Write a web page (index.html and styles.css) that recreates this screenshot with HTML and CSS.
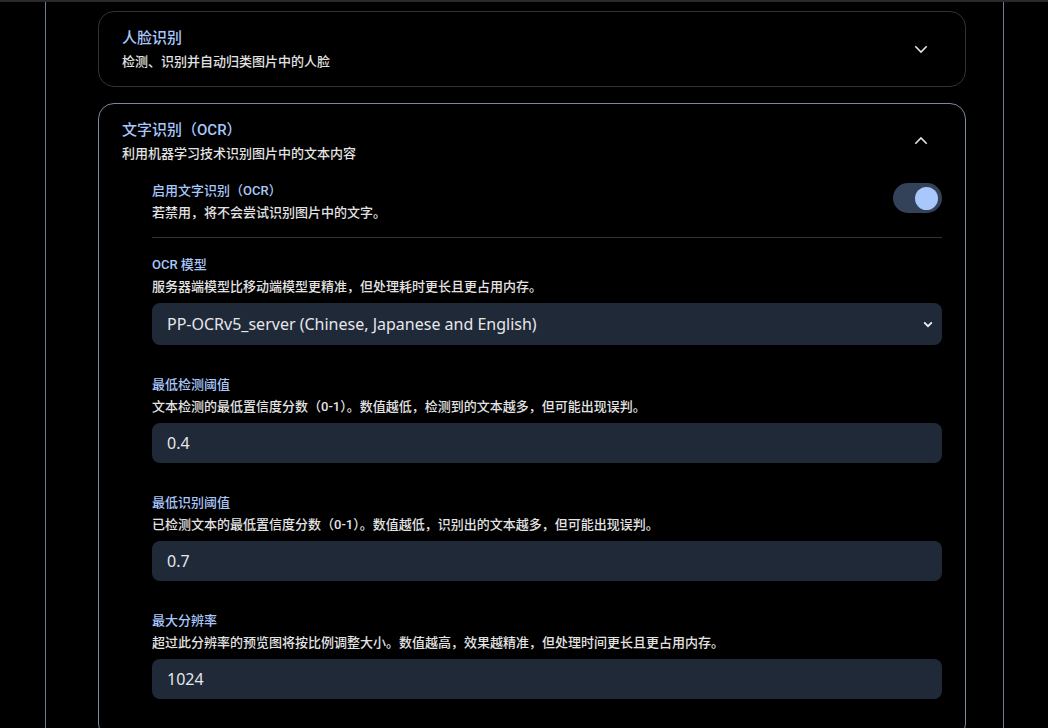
FILE: index.html
```html
<!DOCTYPE html>
<html lang="zh-CN">
<head>
<meta charset="utf-8">
<title>设置</title>
<link rel="stylesheet" href="styles.css">
</head>
<body>
<div class="topbar"></div>
<main class="page">
  <section class="card">
    <div class="card-head">
      <div class="head-text">
        <div class="card-title">人脸识别</div>
        <div class="card-sub">检测、识别并自动归类图片中的人脸</div>
      </div>
      <button class="icon-btn" aria-label="展开">
        <svg width="24" height="24" viewBox="0 0 24 24"><path d="M6.3 9.3L12 15l5.7-5.7" fill="none" stroke="#e3e3e3" stroke-width="1.6"/></svg>
      </button>
    </div>
  </section>

  <section class="card open">
    <div class="card-head">
      <div class="head-text">
        <div class="card-title">文字识别（OCR）</div>
        <div class="card-sub">利用机器学习技术识别图片中的文本内容</div>
      </div>
      <button class="icon-btn" aria-label="收起">
        <svg width="24" height="24" viewBox="0 0 24 24"><path d="M6.3 14.7L12 9l5.7 5.7" fill="none" stroke="#e3e3e3" stroke-width="1.6"/></svg>
      </button>
    </div>
    <div class="card-body">
      <div class="toggle-row">
        <div class="field-text">
          <div class="label">启用文字识别（OCR）</div>
          <div class="desc">若禁用，将不会尝试识别图片中的文字。</div>
        </div>
        <div class="switch"><div class="knob"></div></div>
      </div>

      <div class="fields">
        <div class="field">
          <div class="label">OCR 模型</div>
          <div class="desc">服务器端模型比移动端模型更精准，但处理耗时更长且更占用内存。</div>
          <div class="select">
            <span>PP-OCRv5_server (Chinese, Japanese and English)</span>
            <svg width="10" height="7" viewBox="0 0 10 7"><path d="M1.2 1.4L5 5.2 8.8 1.4" fill="none" stroke="#f0f0f0" stroke-width="1.8"/></svg>
          </div>
        </div>

        <div class="field">
          <div class="label">最低检测阈值</div>
          <div class="desc">文本检测的最低置信度分数（0-1）。数值越低，检测到的文本越多，但可能出现误判。</div>
          <div class="input">0.4</div>
        </div>

        <div class="field">
          <div class="label">最低识别阈值</div>
          <div class="desc">已检测文本的最低置信度分数（0-1）。数值越低，识别出的文本越多，但可能出现误判。</div>
          <div class="input">0.7</div>
        </div>

        <div class="field">
          <div class="label">最大分辨率</div>
          <div class="desc">超过此分辨率的预览图将按比例调整大小。数值越高，效果越精准，但处理时间更长且更占用内存。</div>
          <div class="input">1024</div>
        </div>
      </div>
    </div>
  </section>
</main>
</body>
</html>
```

FILE: styles.css
```css
* { box-sizing: border-box; }
html, body {
  margin: 0;
  padding: 0;
  background: #000;
  height: 100%;
  overflow: hidden;
}
body {
  font-family: Roboto, "Noto Sans CJK SC", sans-serif;
  color: #e3e3e3;
}
.topbar {
  height: 2px;
  background: #2a2a2a;
}
.page {
  margin-left: 45px;
  width: 959px;
  min-height: 726px;
  border-left: 1px solid #717c8e;
  border-right: 1px solid #717c8e;
  padding: 9px 37px 0 52px;
  display: flex;
  flex-direction: column;
  gap: 16px;
}
.card {
  border: 1px solid #2e333b;
  border-radius: 16px;
  padding: 0 23px;
}
.card.open {
  border-color: #7b879a;
}
.card-head {
  display: flex;
  align-items: center;
  justify-content: space-between;
  padding: 14px 0;
}
.head-text {
  display: flex;
  flex-direction: column;
  gap: 2px;
}
.card-title {
  font-size: 15px;
  line-height: 24px;
  font-weight: 500;
  color: #a8c7fa;
}
.card-sub {
  font-size: 13px;
  line-height: 20px;
  font-weight: 500;
  color: #e3e3e3;
}
.icon-btn {
  width: 40px;
  height: 40px;
  border: none;
  background: transparent;
  padding: 0;
  display: flex;
  align-items: center;
  justify-content: center;
  margin-right: 1px;
}
.card-body {
  padding: 3px 0 40px 30px;
}
.toggle-row {
  display: flex;
  justify-content: space-between;
  align-items: flex-start;
  padding-bottom: 14px;
  border-bottom: 1px solid #333;
}
.field-text {
  display: flex;
  flex-direction: column;
  gap: 2px;
}
.label {
  font-size: 13px;
  line-height: 20px;
  font-weight: 500;
  color: #a8c7fa;
}
.desc {
  font-size: 13px;
  line-height: 20px;
  font-weight: 500;
  color: #e3e3e3;
}
.switch {
  width: 49px;
  height: 30px;
  margin-top: 2px;
  border-radius: 15px;
  background: #344259;
  display: flex;
  align-items: center;
  justify-content: flex-end;
  padding-right: 4px;
}
.knob {
  width: 23px;
  height: 23px;
  border-radius: 50%;
  background: #a8c7fa;
}
.fields {
  padding-top: 17px;
  display: flex;
  flex-direction: column;
  gap: 30px;
}
.field {
  display: flex;
  flex-direction: column;
}
.field .desc {
  margin-top: 2px;
  margin-bottom: 6px;
}
.select, .input {
  background: #1f2937;
  border-radius: 8px;
  padding: 0 15px;
  font-family: "Noto Sans", "Noto Sans CJK SC", sans-serif;
  font-size: 16px;
  color: #e5e7eb;
  display: flex;
  align-items: center;
}
.select {
  height: 42px;
  justify-content: space-between;
  padding-right: 9px;
}
.input {
  height: 40px;
}
```
